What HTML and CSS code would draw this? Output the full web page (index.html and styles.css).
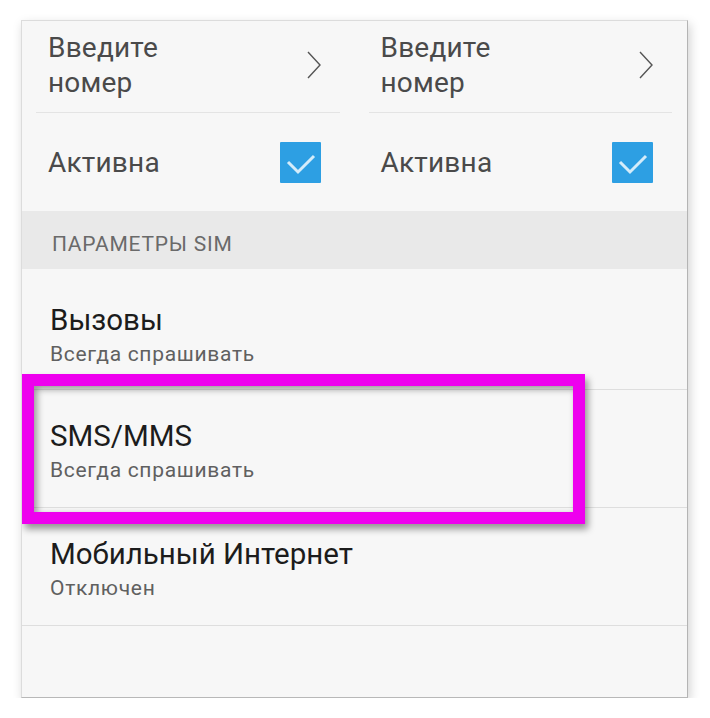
FILE: index.html
```html
<!doctype html>
<html lang="ru">

<head>
    <title>SIM-карты</title>
    <meta charset="utf-8" />
    <meta name="viewport" content="width=device-width, initial-scale=1.0" />
    <link rel="stylesheet" href="styles.css">
</head>

<body>
    <div class="card">
        <div class="sims">
            <div class="sim">
                <div class="sim-row number">
                    <span class="sim-label">Введите<br>номер</span>
                    <svg class="chevron" width="14" height="28" viewBox="0 0 14 28">
                        <path d="M1 1 L13 14 L1 27" fill="none" stroke="#555" stroke-width="1.4" />
                    </svg>
                </div>
                <div class="sim-row">
                    <span class="sim-label">Активна</span>
                    <span class="checkbox">
                        <svg width="41" height="41" viewBox="0 0 41 41">
                            <path d="M8 20 L18 30 L34 14" fill="none" stroke="#d4ecfa" stroke-width="3" />
                        </svg>
                    </span>
                </div>
            </div>
            <div class="sim">
                <div class="sim-row number">
                    <span class="sim-label">Введите<br>номер</span>
                    <svg class="chevron" width="14" height="28" viewBox="0 0 14 28">
                        <path d="M1 1 L13 14 L1 27" fill="none" stroke="#555" stroke-width="1.4" />
                    </svg>
                </div>
                <div class="sim-row">
                    <span class="sim-label">Активна</span>
                    <span class="checkbox">
                        <svg width="41" height="41" viewBox="0 0 41 41">
                            <path d="M8 20 L18 30 L34 14" fill="none" stroke="#d4ecfa" stroke-width="3" />
                        </svg>
                    </span>
                </div>
            </div>
        </div>

        <div class="section">ПАРАМЕТРЫ SIM</div>

        <div class="item first">
            <div class="item-title">Вызовы</div>
            <div class="item-value">Всегда спрашивать</div>
        </div>
        <div class="item">
            <div class="item-title">SMS/MMS</div>
            <div class="item-value">Всегда спрашивать</div>
            <div class="highlight"></div>
        </div>
        <div class="item">
            <div class="item-title">Мобильный Интернет</div>
            <div class="item-value">Отключен</div>
        </div>
    </div>
</body>

</html>
```

FILE: styles.css
```css
body {
    margin: 0;
    padding: 20px 0 0 21px;
    background-color: #ffffff;
    font-family: Roboto, "Liberation Sans", sans-serif;
}

.card {
    width: 665px;
    height: 676px;
    background-color: #f7f7f7;
    border: 1px solid #dcdcdc;
    border-right-color: #b4b4b4;
    border-bottom-color: #b8b8b8;
    box-shadow: 2px 4px 10px rgba(0, 0, 0, 0.18);
    overflow: hidden;
}

/* two SIM slots side by side */
.sims {
    display: grid;
    grid-template-columns: 1fr 1fr;
}

.sim-row {
    display: flex;
    align-items: center;
    justify-content: space-between;
    padding: 0 34px 0 26px;
    height: 98px;
}

.sim-row.number {
    padding-top: 9px;
    padding-bottom: 13px;
    box-sizing: border-box;
    height: 92px;
    position: relative;
}

.sim-row.number::after {
    content: "";
    position: absolute;
    left: 14px;
    right: 15px;
    bottom: 0;
    height: 1px;
    background-color: #e4e4e4;
}

.sim-label {
    font-size: 28px;
    line-height: 35px;
    letter-spacing: 0.2px;
    color: #4a4a4a;
}

.chevron {
    display: block;
}

.checkbox {
    display: block;
    width: 41px;
    height: 41px;
    background-color: #2d9fe3;
    border-radius: 1px;
}

.checkbox svg {
    display: block;
}

.section {
    height: 58px;
    box-sizing: border-box;
    padding: 20px 0 0 30px;
    background-color: #e9e9e9;
    font-size: 21px;
    line-height: 26px;
    letter-spacing: 0.8px;
    color: #6a6a6a;
}

.item {
    position: relative;
    height: 118px;
    box-sizing: border-box;
    padding: 29px 0 0 28px;
    border-bottom: 1px solid #dedede;
}

.item.first {
    height: 121px;
    padding-top: 34px;
}

.item-title {
    font-size: 29.5px;
    line-height: 34px;
    color: #1c1c1c;
}

.item-value {
    margin-top: 3px;
    font-size: 21px;
    line-height: 28px;
    letter-spacing: 0.7px;
    color: #606060;
}

/* marker drawn over the SMS/MMS row */
.highlight {
    position: absolute;
    left: 0;
    top: -16px;
    width: 539px;
    height: 126px;
    border: 12px solid #ee00ee;
    box-shadow: 3px 5px 7px rgba(0, 0, 0, 0.4), inset 3px 3px 7px rgba(0, 0, 0, 0.4);
}
```
